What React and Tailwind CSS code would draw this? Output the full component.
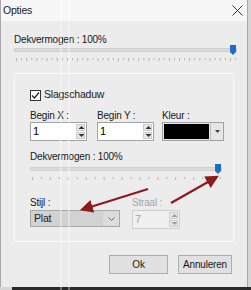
import React from "react";

function Ticks({ width, count }) {
  const step = (width - 4) / (count - 1);
  return (
    <svg width={width} height="4" className="block">
      {Array.from({ length: count }).map((_, i) => (
        <rect key={i} x={2 + i * step} y="0" width="1" height={i % 2 === 0 ? 3 : 2} fill="#b4b4b4" />
      ))}
    </svg>
  );
}

function Slider({ width, ticks }) {
  return (
    <div className="flex flex-col" style={{ width }}>
      <div className="relative h-[10px] flex items-center">
        <div className="w-full h-[4px] bg-[#dadada] border border-[#d0d0d0]" />
        <svg width="6" height="10" className="absolute right-[1px] top-0">
          <path d="M0 0 H6 V7 L3 10 L0 7 Z" fill="#1b6fc4" />
        </svg>
      </div>
      <div className="mt-[3px]">
        <Ticks width={width} count={ticks} />
      </div>
    </div>
  );
}

function Spin({ value, disabled, width }) {
  return (
    <div
      className={`flex h-[19px] border ${disabled ? "border-[#cfcfcf] bg-[#f0f0f0] text-[#a6a6a6]" : "border-[#a3a3a3] bg-white text-black"}`}
      style={{ width }}
    >
      <div className="flex-1 pl-[2px] leading-[17px] text-[11px]">{value}</div>
      <div className="w-[9px] flex flex-col my-[1px] mr-[1px] gap-[1px]">
        {["M1.5 4 L4.5 1 L7.5 4Z", "M1.5 1 L4.5 4 L7.5 1Z"].map((d, i) => (
          <div key={i} className="flex-1 bg-[#e6e6e6] border border-[#cdcdcd] flex items-center justify-center">
            <svg width="9" height="5">
              <path d={d} fill={disabled ? "#a0a0a0" : "#333"} />
            </svg>
          </div>
        ))}
      </div>
    </div>
  );
}

export default function App() {
  return (
    <div
      className="relative w-[251px] h-[290px] overflow-hidden bg-[#d6d6d6] text-[10px] tracking-[-0.2px] text-[#1a1a1a]"
      style={{ fontFamily: '"Liberation Sans", Arial, sans-serif' }}
    >
      <div className="w-[248px] h-[287px] flex flex-col bg-[#ececec] border-l border-r border-[#a9a9a9]">
        <div className="h-[21px] flex items-center justify-between bg-[#f7f7f7] pl-[2px] pr-[4px]">
          <span className="text-[10.5px]">Opties</span>
          <svg width="11" height="11" viewBox="0 0 11 11">
            <path d="M0.5 0.5 L10.5 10.5 M10.5 0.5 L0.5 10.5" stroke="#333" strokeWidth="1" />
          </svg>
        </div>

        <div className="flex flex-col px-[13px]">
          <div className="mt-[12px] leading-[14px]">Dekvermogen : 100%</div>
          <div className="mt-[-2px]">
            <Slider width={223} ticks={44} />
          </div>

          <div className="mt-[11px] h-[169px] border border-[#f8f8f8] flex flex-col pl-[15px]">
            <div className="mt-[14px] h-[14px] flex items-center gap-[3px]">
              <div className="w-[11px] h-[11px] border border-[#333] bg-white flex items-center justify-center">
                <svg width="9" height="9" viewBox="0 0 9 9">
                  <path d="M1 4.5 L3.5 7 L8 1.5" stroke="#222" strokeWidth="1.2" fill="none" />
                </svg>
              </div>
              <span className="text-[10.5px]">Slagschaduw</span>
            </div>

            <div className="mt-[8px] flex gap-[10px]">
              <div className="flex flex-col">
                <span className="leading-[12px]">Begin X :</span>
                <Spin value="1" width={57} />
              </div>
              <div className="flex flex-col">
                <span className="leading-[12px]">Begin Y :</span>
                <Spin value="1" width={57} />
              </div>
              <div className="flex flex-col ml-[-2px]">
                <span className="leading-[12px]">Kleur :</span>
                <div className="flex h-[19px] w-[62px] border border-[#a3a3a3] bg-[#e6e6e6]">
                  <div className="w-[45px] m-[1px] bg-black" />
                  <div className="flex-1 flex items-center justify-center border-l border-[#c0c0c0]">
                    <svg width="5" height="3">
                      <path d="M0 0 H5 L2.5 3Z" fill="#444" />
                    </svg>
                  </div>
                </div>
              </div>
            </div>

            <div className="mt-[9px] leading-[14px]">Dekvermogen : 100%</div>
            <Slider width={192} ticks={22} />

            <div className="mt-[15px] flex gap-[12px]">
              <div className="flex flex-col">
                <span className="leading-[14px]">Stijl :</span>
                <div className="flex h-[17px] w-[90px] border border-[#a8a8a8] bg-[#d2d2d2]">
                  <span className="flex-1 pl-[3px] leading-[15px] text-[10.5px]">Plat</span>
                  <div className="w-[16px] flex items-center justify-center bg-[#dcdcdc]">
                    <svg width="7" height="4">
                      <path d="M0.5 0.5 L3.5 3.5 L6.5 0.5" stroke="#666" fill="none" />
                    </svg>
                  </div>
                </div>
              </div>
              <div className="flex flex-col">
                <span className="leading-[14px] text-[#a6a6a6]">Straal :</span>
                <Spin value="7" width={48} disabled />
              </div>
            </div>
          </div>

          <div className="mt-[13px] flex justify-end gap-[10px] pr-[2px]">
            <button className="w-[59px] h-[19px] bg-[#e1e1e1] border border-[#adadad] text-[10px]">Ok</button>
            <button className="w-[54px] h-[19px] bg-[#e1e1e1] border border-[#adadad] text-[10px]">Annuleren</button>
          </div>
        </div>
      </div>
      <div className="h-[3px] ml-[12px] bg-[#2a2a2a]" />

      <svg className="absolute left-0 top-0 pointer-events-none" width="251" height="290">
        <defs>
          <marker id="ah" markerWidth="6" markerHeight="6" refX="4" refY="3" orient="auto">
            <path d="M0 0 L6 3 L0 6 Z" fill="#8e1b1b" />
          </marker>
        </defs>
        <line x1="148" y1="189" x2="84" y2="209" stroke="#8e1b1b" strokeWidth="2.2" markerEnd="url(#ah)" />
        <line x1="171" y1="203" x2="215" y2="178" stroke="#8e1b1b" strokeWidth="2.2" markerEnd="url(#ah)" />
        <rect x="60" y="0" width="2" height="290" fill="#ffffff" opacity="0.35" />
        <rect x="68" y="0" width="2" height="290" fill="#ffffff" opacity="0.35" />
      </svg>
    </div>
  );
}
